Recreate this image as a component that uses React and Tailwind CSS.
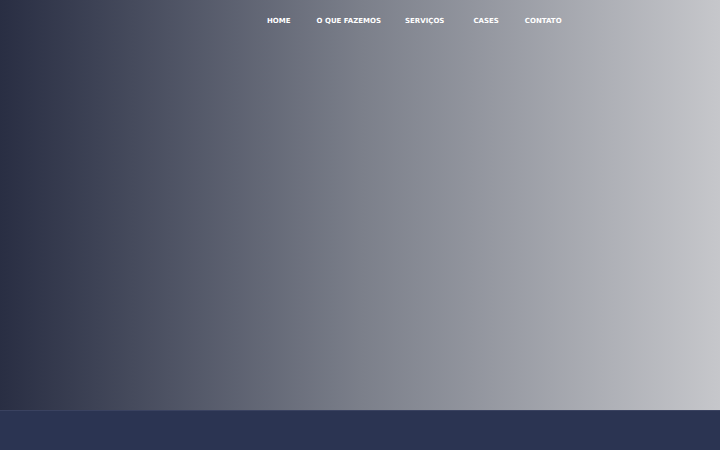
export default function App() {
  return (
    <div className="w-[720px] h-[450px] overflow-hidden font-['DejaVu_Sans',sans-serif]">
      {/* Hero */}
      <div className="h-[410px] bg-gradient-to-r from-[#292e43] via-[#7b7f8a] to-[#c6c7cb]">
        <nav className="flex items-center pl-[267px] pt-[16px]">
          <a className="text-[7px] font-bold text-white mr-[26px]">HOME</a>
          <a className="text-[7px] font-bold text-white mr-[24px]">O QUE FAZEMOS</a>
          <a className="text-[7px] font-bold text-white mr-[29px]">SERVIÇOS</a>
          <a className="text-[7px] font-bold text-white mr-[26px]">CASES</a>
          <a className="text-[7px] font-bold text-white">CONTATO</a>
        </nav>
      </div>

      {/* Next section */}
      <div className="h-[40px] bg-[#2b3452] border-t border-[#3a4260]" />
    </div>
  )
}
